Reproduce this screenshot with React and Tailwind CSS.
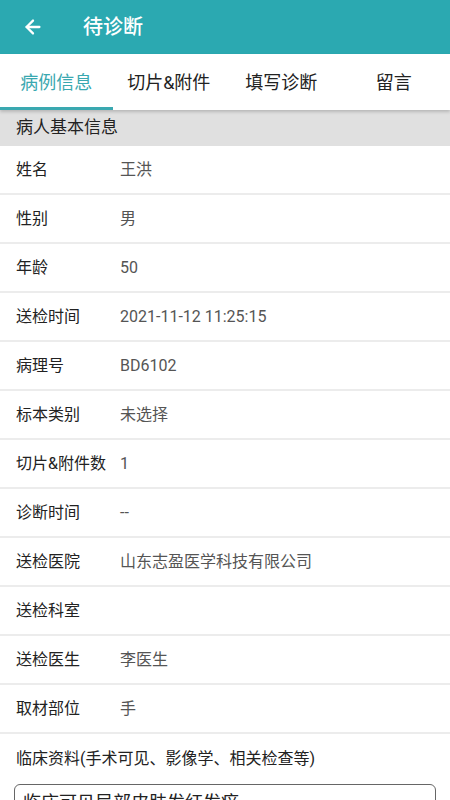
import { ArrowLeft } from 'lucide-react';

const rows = [
  ['姓名', '王洪'],
  ['性别', '男'],
  ['年龄', '50'],
  ['送检时间', '2021-11-12 11:25:15'],
  ['病理号', 'BD6102'],
  ['标本类别', '未选择'],
  ['切片&附件数', '1'],
  ['诊断时间', '--'],
  ['送检医院', '山东志盈医学科技有限公司'],
  ['送检科室', ''],
  ['送检医生', '李医生'],
  ['取材部位', '手'],
];

const tabs = ['病例信息', '切片&附件', '填写诊断', '留言'];

export default function App() {
  return (
    <div className="w-[450px] h-[800px] overflow-hidden bg-white" style={{ fontFamily: 'Roboto, "Noto Sans CJK SC", sans-serif' }}>
      <div className="h-[54px] bg-[#2ba9b1] flex items-center text-white">
        <div className="w-[64px] pl-[22px] flex items-center">
          <ArrowLeft size={22} strokeWidth={2.5} />
        </div>
        <span className="ml-[19px] text-[20px] font-medium">待诊断</span>
      </div>

      <div className="relative z-10 h-[56px] flex bg-white shadow-[0_2px_3px_rgba(0,0,0,0.18)]">
        {tabs.map((t, i) => (
          <div key={t} className={`flex-1 flex items-center justify-center text-[18px] relative ${i === 0 ? 'text-[#3aa8b0]' : 'text-[#222]'}`}>
            {t}
            {i === 0 && <div className="absolute left-0 right-0 bottom-0 h-[3px] bg-[#3aa8b0]" />}
          </div>
        ))}
      </div>

      <div className="h-[36px] bg-[#e0e0e0] flex items-center px-4 text-[17px] text-[#222]">病人基本信息</div>

      {rows.map(([k, v]) => (
        <div key={k} className="h-[49px] border-b-2 border-[#ececec] flex items-center text-[16px] pt-px">
          <span className="w-[120px] pl-4 text-[#222]">{k}</span>
          <span className="text-[#555]">{v}</span>
        </div>
      ))}

      <div className="pt-[13px] px-4 text-[16px] text-[#222]">临床资料(手术可见、影像学、相关检查等)</div>
      <div className="mx-[14px] mt-[13px] h-[80px] border border-[#666] rounded-[6px] px-2 pt-1 text-[18px] text-[#222]">
        临床可见局部皮肤发红发痒
      </div>
    </div>
  );
}
